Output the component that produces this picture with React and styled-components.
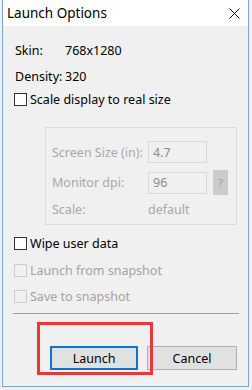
import React from "react"
import styled, { createGlobalStyle } from "styled-components"

const Global = createGlobalStyle`
html, body {
  margin: 0;
  padding: 0;
  background: #eef2f7;
  font-family: "Noto Sans", "Open Sans", sans-serif;
  font-size: 12.5px;
  color: #000;
}
`

const Screen = styled.div`
position: relative;
width: 252px;
height: 390px;
padding-left: 2px;
box-sizing: border-box;
`

const Frame = styled.div`
width: 247px;
height: 387px;
box-sizing: border-box;
border: 1px solid #7ea2d2;
border-top: none;
background: #f0f0f0;
display: flex;
flex-direction: column;
`

const TitleBar = styled.div`
height: 26px;
background: #fff;
display: flex;
align-items: center;
justify-content: space-between;
padding: 0 8px 0 4px;
font-size: 13.5px;
`

const Body = styled.div`
display: flex;
flex-direction: column;
padding: 14px 9px 0 12px;
`

const Row = styled.div`
display: flex;
align-items: center;
height: 20px;
margin-top: ${p => p.gap || 0}px;
color: ${p => (p.disabled ? "#a3a3a3" : "#000")};
`

const Label = styled.span`
width: ${p => p.w || 50}px;
`

const Box = styled.span`
width: 13px;
height: 13px;
box-sizing: border-box;
margin-left: -1px;
margin-right: 3px;
border: 1px solid ${p => (p.disabled ? "#cdcdcd" : "#333")};
background: ${p => (p.disabled ? "#f0f0f0" : "#fff")};
`

const Group = styled.div`
margin: 18px 0 0 30px;
width: 192px;
height: 98px;
box-sizing: border-box;
border: 1px solid #dcdcdc;
padding: 13px 0 0 6px;
display: flex;
flex-direction: column;
color: #a8a8a8;
`

const GroupRow = styled.div`
display: flex;
align-items: center;
height: ${p => p.h}px;
margin-top: ${p => p.gap || 0}px;
`

const Field = styled.div`
width: 59px;
height: 22px;
box-sizing: border-box;
border: 1px solid #d9d9d9;
background: #f0f0f0;
color: #8c8c8c;
padding-left: 4px;
display: flex;
align-items: center;
`

const Help = styled.div`
width: 15px;
height: 25px;
margin-left: 6px;
background: #cccccc;
color: #a0a0a0;
font-size: 11px;
display: flex;
align-items: center;
justify-content: center;
`

const Separator = styled.div`
margin: 7px 0 0 -2px;
width: 226px;
height: 1px;
background: #a0a0a0;
`

const Buttons = styled.div`
display: flex;
gap: 9px;
margin: 32px 0 0 35px;
`

const Button = styled.div`
width: ${p => p.w}px;
height: 24px;
box-sizing: border-box;
background: #e1e1e1;
border: ${p => (p.primary ? "2px solid #0a74d0" : "1px solid #adadad")};
display: flex;
align-items: center;
justify-content: center;
`

const Highlight = styled.div`
position: absolute;
left: 37px;
top: 322px;
width: 116px;
height: 53px;
box-sizing: border-box;
border: 3px solid #e8383d;
pointer-events: none;
`

const Close = () => (
  <svg width="11" height="11" viewBox="0 0 11 11">
    <path d="M0.5 0.5 L10.5 10.5 M10.5 0.5 L0.5 10.5" stroke="#111" strokeWidth="1" />
  </svg>
)

const Check = ({ label, disabled, gap }) => (
  <Row gap={gap} disabled={disabled}>
    <Box disabled={disabled} />
    {label}
  </Row>
)

export default function App() {
  return (
    <Screen>
      <Global />
      <Frame>
        <TitleBar>
          <span>Launch Options</span>
          <Close />
        </TitleBar>
        <Body>
          <Row>
            <Label>Skin:</Label>768x1280
          </Row>
          <Row gap={6}>
            <Label>Density:</Label>320
          </Row>
          <Check label="Scale display to real size" gap={3} />
          <Group>
            <GroupRow h={22}>
              <Label w={96}>Screen Size (in):</Label>
              <Field>4.7</Field>
            </GroupRow>
            <GroupRow h={25} gap={7}>
              <Label w={96}>Monitor dpi:</Label>
              <Field>96</Field>
              <Help>?</Help>
            </GroupRow>
            <GroupRow h={18} gap={5}>
              <Label w={96}>Scale:</Label>default
            </GroupRow>
          </Group>
          <Check label="Wipe user data" gap={8} />
          <Check label="Launch from snapshot" disabled gap={7} />
          <Check label="Save to snapshot" disabled gap={6} />
          <Separator />
          <Buttons>
            <Button primary w={88}>Launch</Button>
            <Button w={90}>Cancel</Button>
          </Buttons>
        </Body>
      </Frame>
      <Highlight />
    </Screen>
  )
}
